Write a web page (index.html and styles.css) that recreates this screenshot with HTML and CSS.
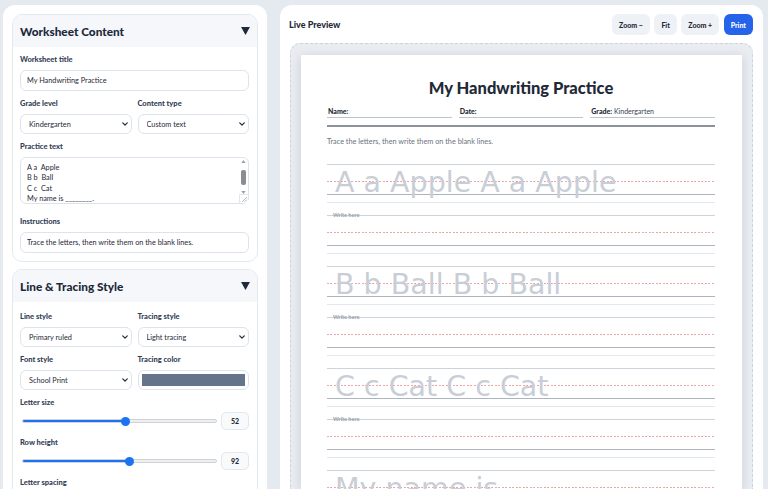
FILE: index.html
```html
<!DOCTYPE html>
<html lang="en">
<head>
<meta charset="utf-8">
<title>Handwriting Worksheet Maker</title>
<link rel="stylesheet" href="styles.css">
</head>
<body>
<div class="app">
  <aside class="sidebar">
    <section class="panel">
      <header class="panel-head">
        <h2>Worksheet Content</h2>
        <svg class="caret" viewBox="0 0 10 9" width="9" height="8"><path d="M0 0H10L5 9Z"/></svg>
      </header>
      <div class="panel-body">
        <div class="field">
          <label>Worksheet title</label>
          <input class="control" type="text" value="My Handwriting Practice">
        </div>
        <div class="pair">
          <div class="field">
            <label>Grade level</label>
            <div class="select-wrap">
              <select class="control"><option>Kindergarten</option></select>
              <svg class="chev" viewBox="0 0 8 5" width="6" height="4"><path d="M1 1L4 4L7 1"/></svg>
            </div>
          </div>
          <div class="field">
            <label>Content type</label>
            <div class="select-wrap">
              <select class="control"><option>Custom text</option></select>
              <svg class="chev" viewBox="0 0 8 5" width="6" height="4"><path d="M1 1L4 4L7 1"/></svg>
            </div>
          </div>
        </div>
        <div class="field">
          <label>Practice text</label>
          <div class="area-wrap">
            <textarea class="control area">A a  Apple
B b  Ball
C c  Cat
My name is ________.
I can write.
The sun is hot.
I see a dog.
We like to read.</textarea>
            <div class="fake-scroll">
              <svg class="arrow" viewBox="0 0 6 4" width="5" height="3"><path d="M0 4L3 0L6 4Z"/></svg>
              <div class="thumb"></div>
              <svg class="arrow" viewBox="0 0 6 4" width="5" height="3"><path d="M0 0L6 0L3 4Z"/></svg>
            </div>
            <svg class="grip" viewBox="0 0 9 9" width="9" height="9"><path d="M0.5 9V0.5H9" fill="none" stroke="#e3e7ec"/><path d="M3 8L8 3M5.5 8L8 5.5" stroke="#9aa0a8" stroke-width="0.7"/></svg>
          </div>
        </div>
        <div class="field">
          <label>Instructions</label>
          <input class="control" type="text" value="Trace the letters, then write them on the blank lines.">
        </div>
      </div>
    </section>

    <section class="panel">
      <header class="panel-head">
        <h2>Line &amp; Tracing Style</h2>
        <svg class="caret" viewBox="0 0 10 9" width="9" height="8"><path d="M0 0H10L5 9Z"/></svg>
      </header>
      <div class="panel-body roomy">
        <div class="pair">
          <div class="field">
            <label>Line style</label>
            <div class="select-wrap">
              <select class="control"><option>Primary ruled</option></select>
              <svg class="chev" viewBox="0 0 8 5" width="6" height="4"><path d="M1 1L4 4L7 1"/></svg>
            </div>
          </div>
          <div class="field">
            <label>Tracing style</label>
            <div class="select-wrap">
              <select class="control"><option>Light tracing</option></select>
              <svg class="chev" viewBox="0 0 8 5" width="6" height="4"><path d="M1 1L4 4L7 1"/></svg>
            </div>
          </div>
        </div>
        <div class="pair">
          <div class="field">
            <label>Font style</label>
            <div class="select-wrap">
              <select class="control"><option>School Print</option></select>
              <svg class="chev" viewBox="0 0 8 5" width="6" height="4"><path d="M1 1L4 4L7 1"/></svg>
            </div>
          </div>
          <div class="field">
            <label>Tracing color</label>
            <div class="color-box"><span class="swatch"></span></div>
          </div>
        </div>
        <div class="field">
          <label>Letter size</label>
          <div class="slider-row">
            <input class="range" type="range" min="20" max="80" value="52" style="--fill: 53.3%">
            <span class="value">52</span>
          </div>
        </div>
        <div class="field">
          <label>Row height</label>
          <div class="slider-row">
            <input class="range" type="range" min="40" max="134" value="92" style="--fill: 54.9%">
            <span class="value">92</span>
          </div>
        </div>
        <div class="field">
          <label>Letter spacing</label>
        </div>
      </div>
    </section>
  </aside>

  <main class="preview-panel">
    <div class="toolbar">
      <h3>Live Preview</h3>
      <div class="buttons">
        <button class="btn">Zoom −</button>
        <button class="btn">Fit</button>
        <button class="btn">Zoom +</button>
        <button class="btn primary">Print</button>
      </div>
    </div>
    <div class="stage">
      <article class="paper">
        <h1>My Handwriting Practice</h1>
        <div class="meta">
          <div class="meta-field"><b>Name:</b></div>
          <div class="meta-field"><b>Date:</b></div>
          <div class="meta-field"><b>Grade:</b> Kindergarten</div>
        </div>
        <div class="rule"></div>
        <p class="instructions">Trace the letters, then write them on the blank lines.</p>

        <div class="rows">
          <div class="row">
            <div class="l-top"></div><div class="l-mid"></div><div class="l-base"></div><div class="l-desc"></div>
            <span class="trace">A a Apple A a Apple</span>
          </div>
          <div class="row">
            <div class="l-top"></div><div class="l-mid"></div><div class="l-base"></div><div class="l-desc"></div>
            <span class="write-label">Write here</span>
          </div>
          <div class="row">
            <div class="l-top"></div><div class="l-mid"></div><div class="l-base"></div><div class="l-desc"></div>
            <span class="trace">B b Ball B b Ball</span>
          </div>
          <div class="row">
            <div class="l-top"></div><div class="l-mid"></div><div class="l-base"></div><div class="l-desc"></div>
            <span class="write-label">Write here</span>
          </div>
          <div class="row">
            <div class="l-top"></div><div class="l-mid"></div><div class="l-base"></div><div class="l-desc"></div>
            <span class="trace">C c Cat C c Cat</span>
          </div>
          <div class="row">
            <div class="l-top"></div><div class="l-mid"></div><div class="l-base"></div><div class="l-desc"></div>
            <span class="write-label">Write here</span>
          </div>
          <div class="row">
            <div class="l-top"></div><div class="l-mid"></div><div class="l-base"></div><div class="l-desc"></div>
            <span class="trace">My name is ________.</span>
          </div>
        </div>
      </article>
    </div>
  </main>
</div>
</body>
</html>
```

FILE: styles.css
```css
* { box-sizing: border-box; margin: 0; padding: 0; }

html, body { height: 100%; overflow: hidden; }

body {
  background: #e4eaf0;
  font-family: "Lato", "Liberation Sans", sans-serif;
  color: #1e293b;
}

.app {
  display: grid;
  grid-template-columns: 264px 483px;
  column-gap: 13px;
  padding: 5px 0 0 3px;
  height: 100%;
}

/* ---------- sidebar ---------- */
.sidebar {
  background: #fff;
  border-radius: 12px 12px 0 0;
  padding: 9px;
  display: flex;
  flex-direction: column;
  gap: 7px;
  overflow: hidden;
}

.panel {
  border: 1px solid #e4e9f0;
  border-radius: 10px;
  overflow: hidden;
  flex-shrink: 0;
}

.panel-head {
  height: 32px;
  background: #f5f7fa;
  display: flex;
  align-items: center;
  justify-content: space-between;
  padding: 0 7px 0 7px;
}

.panel-head h2 {
  font-size: 11.8px;
  font-weight: 900;
  color: #1e293b;
}

.caret { fill: #1e293b; }

.panel-body {
  padding: 8px 8px 8px 7px;
  display: flex;
  flex-direction: column;
  gap: 8px;
}

.panel-body.roomy { padding-top: 10px; }

.field label {
  display: block;
  font-size: 7.5px;
  font-weight: 900;
  line-height: 10px;
  margin-bottom: 5px;
  color: #334155;
}

.pair {
  display: grid;
  grid-template-columns: 1fr 1fr;
  column-gap: 6px;
}

.control {
  display: block;
  width: 100%;
  height: 21px;
  border: 1px solid #dde3ec;
  border-radius: 6px;
  background: #fff;
  font-family: inherit;
  font-size: 7.3px;
  color: #1f2937;
  padding: 0 6px;
  outline: none;
}

.select-wrap { position: relative; }

select.control {
  -webkit-appearance: none;
  appearance: none;
  height: 20px;
  padding-left: 8px;
}

.chev {
  position: absolute;
  right: 4px;
  top: 8px;
  fill: none;
  stroke: #1f2937;
  stroke-width: 1.6;
  stroke-linecap: round;
  stroke-linejoin: round;
}

.area-wrap { position: relative; margin-bottom: 5px; }

.area {
  height: 47px;
  resize: none;
  overflow: hidden;
  line-height: 10.5px;
  padding: 4.5px 12px 0 6px;
  white-space: pre;
}

.fake-scroll {
  position: absolute;
  top: 3px;
  right: 2px;
  width: 7px;
  height: 34px;
  display: flex;
  flex-direction: column;
  align-items: center;
  justify-content: space-between;
}

.fake-scroll .arrow { fill: #9ea3a9; }

.fake-scroll .thumb {
  width: 4.5px;
  height: 15px;
  border-radius: 2px;
  background: #8a8d91;
}

.grip {
  position: absolute;
  right: 1px;
  bottom: 1px;
  background: #fff;
}

.color-box {
  height: 20px;
  border: 1px solid #dde3ec;
  border-radius: 6px;
  padding: 3px;
  background: #fff;
}

.swatch {
  display: block;
  height: 100%;
  background: #64748b;
}

.slider-row {
  display: flex;
  align-items: center;
  gap: 4px;
  margin-top: -1px;
}

.range {
  -webkit-appearance: none;
  appearance: none;
  flex: 1;
  margin-left: 2px;
  height: 4.5px;
  border-radius: 3px;
  border: 0.5px solid #cfd2d6;
  background: linear-gradient(90deg, #1a73f0 var(--fill), #efefef var(--fill));
  outline: none;
}

.range::-webkit-slider-thumb {
  -webkit-appearance: none;
  appearance: none;
  width: 9px;
  height: 9px;
  border-radius: 50%;
  background: #1a73f0;
  border: none;
}

.value {
  width: 28px;
  height: 18px;
  border: 1px solid #e3e8ef;
  border-radius: 5px;
  background: #f8fafc;
  font-size: 7px;
  font-weight: 900;
  display: grid;
  place-items: center;
  color: #1f2937;
}

/* ---------- preview ---------- */
.preview-panel {
  background: #fff;
  border-radius: 12px 12px 0 0;
  padding: 9px 10px 0 10px;
  display: flex;
  flex-direction: column;
  gap: 8px;
  overflow: hidden;
}

.toolbar {
  display: flex;
  align-items: center;
  justify-content: space-between;
  height: 21px;
}

.toolbar h3 {
  font-size: 9px;
  font-weight: 900;
  color: #1f2937;
  margin-left: -1px;
}

.buttons { display: flex; gap: 4.5px; }

.btn {
  height: 21px;
  padding: 0 7px;
  border: none;
  border-radius: 6px;
  background: #eef1f6;
  font-family: inherit;
  font-size: 7px;
  font-weight: 900;
  color: #1f2937;
}

.btn.primary { background: #2563eb; color: #fff; }

.stage {
  flex: 1;
  background: #e9edf2;
  border: 1px dashed #cbd3dd;
  border-bottom: none;
  border-radius: 10px 10px 0 0;
  padding: 11px 10px 0 10px;
  overflow: hidden;
}

.paper {
  background: #fff;
  height: 100%;
  box-shadow: 0 2px 10px rgba(15, 23, 42, 0.14);
  padding: 22px 27px 0 26px;
}

.paper h1 {
  text-align: center;
  font-size: 16.5px;
  line-height: 22px;
  font-weight: 900;
  color: #1f2937;
}

.meta {
  display: flex;
  gap: 7px;
  margin-top: 7px;
}

.meta-field {
  flex: 1;
  font-size: 7px;
  line-height: 10px;
  padding: 0 1px 1px;
  border-bottom: 1.5px solid #bcc4ce;
  color: #374151;
}

.meta-field b { color: #1f2937; font-weight: 900; }

.rule {
  height: 2px;
  background: #8b929b;
  margin-top: 6.5px;
}

.instructions {
  margin-top: 10px;
  font-size: 7.3px;
  line-height: 10px;
  color: #6b7280;
}

.rows { margin-top: 17px; }

.row {
  position: relative;
  height: 51px;
}

.l-top { height: 1.5px; background: #cdd3db; }
.l-mid {
  height: 1px;
  margin-top: 16px;
  background: repeating-linear-gradient(90deg, #e9a9a9 0 2px, transparent 2px 3.5px);
}
.l-base { height: 1.5px; margin-top: 11.5px; background: #acb4bf; }
.l-desc { height: 1px; margin-top: 7px; background: #e4e8ee; }

.trace {
  position: absolute;
  left: 8px;
  top: 5.9px;
  font-family: "DejaVu Sans", sans-serif;
  font-size: 28.5px;
  line-height: 28.5px;
  white-space: nowrap;
  color: #c9ced6;
}

.write-label {
  position: absolute;
  left: 6px;
  top: -3px;
  font-size: 5.5px;
  line-height: 7px;
  font-weight: 900;
  color: #9ca3af;
}
```
